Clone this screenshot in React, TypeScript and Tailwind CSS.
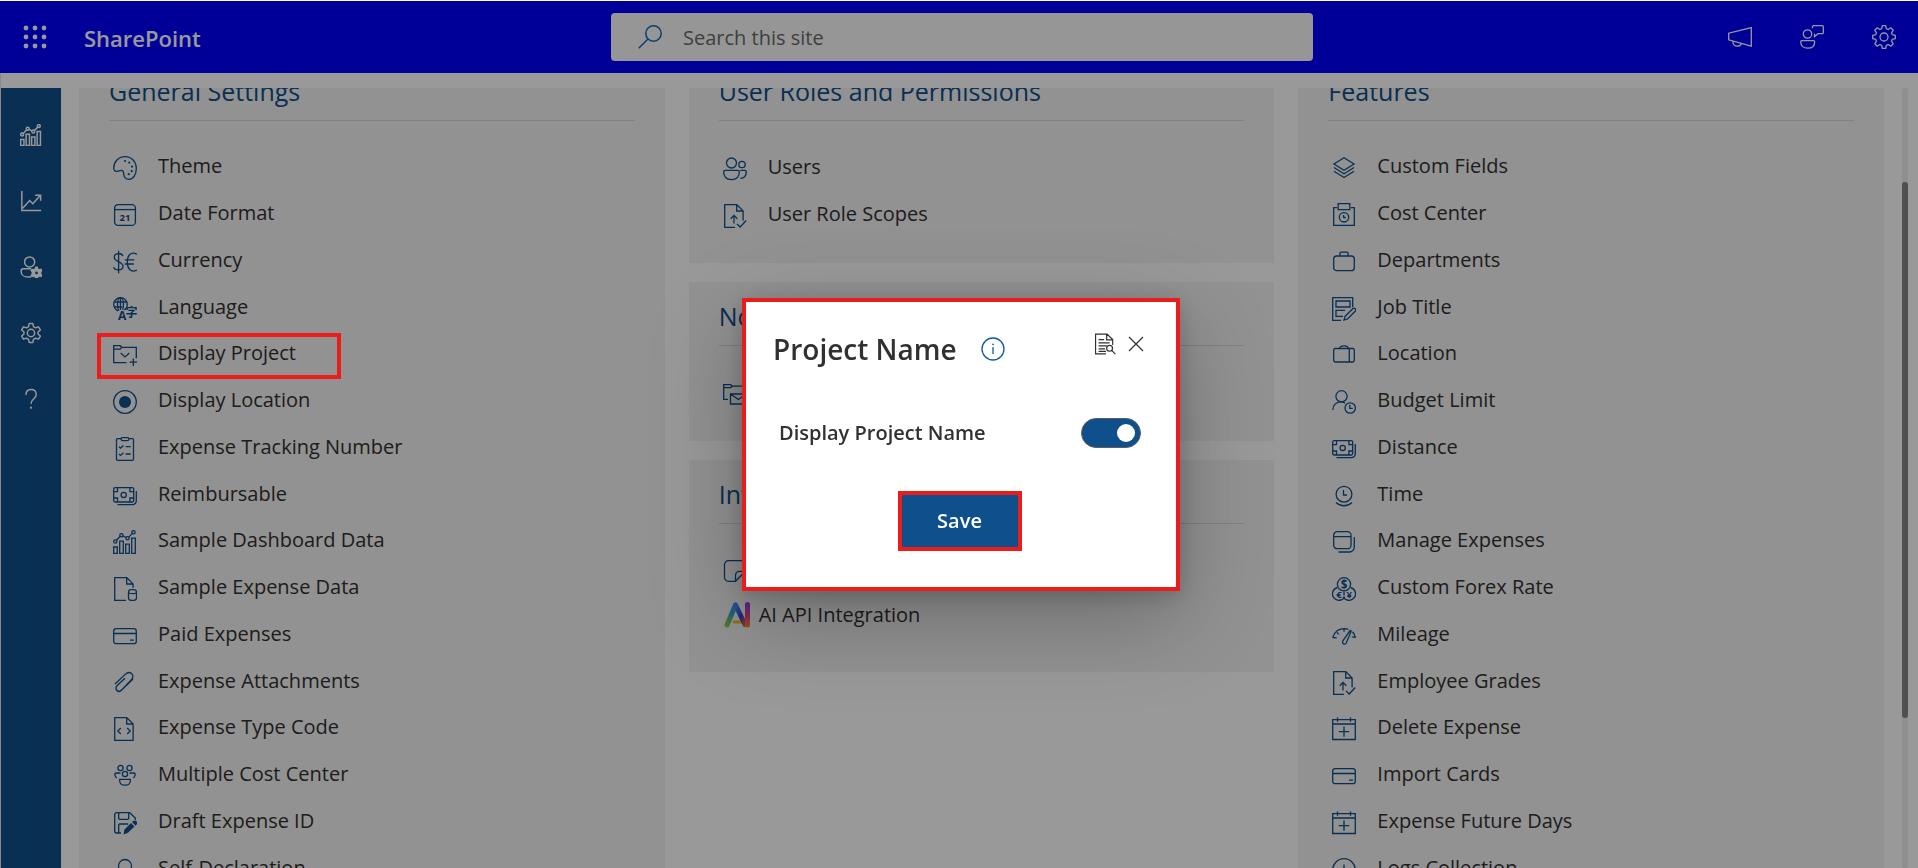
import React from "react";

type IconProps = { children: React.ReactNode; className?: string; weight?: number };

function Svg({ children, className = "size-6", weight = 1.3 }: IconProps) {
  return (
    <svg
      viewBox="0 0 24 24"
      className={`${className} shrink-0`}
      fill="none"
      stroke="currentColor"
      strokeWidth={weight}
      aria-hidden="true"
    >
      {children}
    </svg>
  );
}

const money = (
  <>
    <rect x=".7" y="3.700" width="20" height="14.300" rx="1.500" />
    <circle cx="10.700" cy="10.900" r="2.600" />
    <path d="M.7 7.700h3.800v-4M.7 14h3.800v4M20.700 7.700h-3.800v-4M20.700 14h-3.800v4" />
    <path d="M23.300 7v9.500a4 4 0 0 1-4 4.200H4.500" />
  </>
);

const card = (
  <>
    <rect x=".7" y="4.700" width="22.600" height="15" rx="2.500" />
    <path d="M.7 9.500h22.600M17 16.200h4" />
  </>
);

const chart = (
  <>
    <path d="M.7 17h3.600v6.300H.7zM6.700 11.200h3.600v12.100H6.700zM12.700 14.200h3.600v9.100h-3.600zM18.700 8.200h3.600v15.100h-3.600z" />
    <circle cx="2.300" cy="11.500" r="1.600" />
    <circle cx="8.400" cy="5.200" r="1.600" />
    <circle cx="14.500" cy="8.200" r="1.600" />
    <circle cx="20.500" cy="2.200" r="1.600" />
    <path d="m3.400 10.300 3.900-4M9.900 5.900l3.200 1.600M15.700 7.100l3.700-3.700" />
  </>
);

const docCheck = (
  <>
    <path d="M12 23.300H1.700V.7h12.100l6.300 6.200v9.500M13.700.7v6.300h6.300" />
    <path d="M11 19.500v-8M7.700 14.700 11 11.400l3.300 3.300M14 20l3.200 3 6-6.500" />
  </>
);

const calendarPlus = (
  <>
    <path d="M.7 2.700h22.600v19.800H.7zM.7 7h22.600M5.500.5v4.300M18.500.5v4.300M12 9.500v10.300M6.800 14.600h10.400" />
  </>
);

const icons = {
  chart,
  money,
  card,
  docCheck,
  calendarPlus,
  palette: (
    <>
      <path d="M.8 12.800C.4 6.200 5.200.7 12 .7c6.500 0 11.300 5 11.300 11.800 0 6-3 10.800-7.300 10.800-3.800 0-5.300-2.800-5.400-6.100-.1-2.700-1.600-3.300-3.600-2.600-2.600 1-6 1.500-6.200-1.800Z" />
      <g fill="currentColor" stroke="none">
        <circle cx="12" cy="5" r="1.100" />
        <circle cx="16.300" cy="6.600" r="1.100" />
        <circle cx="19" cy="10.600" r="1.100" />
        <circle cx="18.700" cy="15.200" r="1.100" />
        <circle cx="15.700" cy="18.200" r="1.100" />
      </g>
    </>
  ),
  date: (
    <>
      <rect x="1.600" y="1.600" width="20.800" height="20.800" rx="3.500" />
      <path d="M1.600 6.600h20.800" />
      <text x="12" y="17.700" textAnchor="middle" fontSize="9.500" fontWeight="700" fill="currentColor" stroke="none">21</text>
    </>
  ),
  currency: (
    <>
      <path d="M9.800 6C9 2.700 1.300 2.300 1.300 7.200c0 5 8.700 3.800 8.700 9 0 5-8.500 4.600-9.300 1M5.600.8v22.400" />
      <path d="M24 4.200c-6.500-3.500-9.700 1.800-9.700 7.800s3.200 11.300 9.700 8M11.800 9.800h9.500M11.800 14h9" />
    </>
  ),
  language: (
    <>
      <circle cx="7.500" cy="7.500" r="6.800" />
      <ellipse cx="7.500" cy="7.500" rx="3" ry="6.800" />
      <path d="M1.300 5h12.400M1.300 10h8M7.500.7v13" />
      <circle cx="9" cy="18" r="5.500" className="fill-[#f3f3f3]" stroke="none" />
      <text x="5" y="22.500" fontSize="12" fontWeight="700" fill="currentColor" stroke="none">A</text>
      <text x="12.500" y="20" fontSize="12" fontWeight="700" fill="currentColor" stroke="none" className="font-['Noto_Sans_CJK_SC',sans-serif]">字</text>
    </>
  ),
  folderPlus: (
    <>
      <path d="M13.500 19.700H.7V2.700h6.500l1.500 1.600h14.600v11M.7 6.200h6.500l1.500-1.900" />
      <path d="m7.700 10 4.300 3.900 4.300-3.900M20.300 15.500v7.400M16.600 19.200H24" />
    </>
  ),
  radio: (
    <>
      <circle cx="12" cy="12" r="11.300" />
      <circle cx="12" cy="12" r="6" fill="currentColor" stroke="none" />
    </>
  ),
  clipboard: (
    <>
      <path d="M8 1.700H4.500a1 1 0 0 0-1 1v19.600a1 1 0 0 0 1 1h15a1 1 0 0 0 1-1V2.700a1 1 0 0 0-1-1H16" />
      <rect x="8" y=".6" width="8" height="3" rx="1.500" />
      <path d="m6 9.700 1.500 1.400L10.500 8.400M6 17l1.500 1.400 3-2.700M12.700 9.700h5M12.700 17h5" />
    </>
  ),
  docDb: (
    <>
      <path d="M13 23.300H1.700V.7h12.100l6.300 6.200v3.800M13.700.7v6.300h6.300" />
      <rect x="15.500" y="12.600" width="8" height="10.700" rx="2.600" />
      <path d="M15.500 15.500c1 1.500 7 1.500 8 0" />
    </>
  ),
  paperclip: (
    <path d="M2 13 12.200 3.400c5-4.600 10.500 1 6 5.600L9.200 18.500c-4 4-8.200-.3-5-4L12 7.200M3.500 15.200c-1.500 4 1.800 7.500 5.700 3.300L20 8" />
  ),
  docCode: (
    <>
      <path d="M1.700.7h12.100l6.300 6.200v16.400H1.700zM13.700.7v6.300h6.300" />
      <path d="m7.800 11-3 3 3 3M14.200 11l3 3-3 3" />
    </>
  ),
  team: (
    <>
      <circle cx="7.500" cy="4" r="2.600" />
      <circle cx="16.500" cy="4" r="2.600" />
      <circle cx="12" cy="10" r="2.600" />
      <path d="M6.700 15.300h10.600v1.600a4 4 0 0 1-4 4.200h-2.600a4 4 0 0 1-4-4.200zM7.500 9H3.200C1.300 9 1.300 12 3.700 14M16.500 9h4.300c1.900 0 1.900 3-.5 5" />
    </>
  ),
  saveEdit: (
    <>
      <path d="M8 22H3.700a2 2 0 0 1-2-2V3.700a2 2 0 0 1 2-2h13L22.300 7v2M5.700 1.700v5.600a1 1 0 0 0 1 1h8a1 1 0 0 0 1-1V1.700M5.700 22v-8a1 1 0 0 1 1-1h8.500" />
      <path d="m18 12 3.500 3.500-6.500 6.300-4.500 1.700 1-4.900zM19 11l1.200-1a2.500 2.500 0 0 1 3.500 3.500L22.500 14.700z" fill="currentColor" stroke="none" />
    </>
  ),
  person: (
    <>
      <circle cx="12" cy="8" r="6.500" />
      <path d="M2 23c1-5 5-8.500 10-8.500s9 3.500 10 8.500" />
    </>
  ),
  users: (
    <>
      <circle cx="8.500" cy="6" r="5" />
      <circle cx="19" cy="7.500" r="3.200" />
      <path d="M2.200 13.300h12.600c.8 0 1.500.7 1.500 1.500 0 5.300-3 7.900-7.800 7.900S.7 20.100.7 14.800c0-.8.700-1.500 1.500-1.500ZM17.300 13.300h4.500c.8 0 1.500.7 1.500 1.500 0 4.500-2 6.500-6 6.500" />
    </>
  ),
  folderMail: (
    <>
      <path d="M5 17.300H.7V2.700h7l1.500 1.500h14.100v5M.7 5.700h7l1.500-1.500" />
      <path d="M7.500 12h15.800v10H7.500zM7.500 12l7.900 5.500 7.900-5.500" />
    </>
  ),
  note: (
    <path d="M12.500 22.300H5.500a4 4 0 0 1-4-4V5.700a4 4 0 0 1 4-4h13a4 4 0 0 1 4 4v6.600zM12.500 22.300v-6a4 4 0 0 1 4-4h6" />
  ),
  layers: (
    <path d="M12 1.700 22 8l-10 6.200L2 8zM2 11.500l10 6.200 10-6.200M2 15.200l10 6.300 10-6.300" />
  ),
  costCenter: (
    <>
      <path d="M5 4.700H1.700v17.600h20.600V4.700H19M6.200.7h11.600v6H6.200z" />
      <circle cx="12" cy="14.300" r="4.700" />
      <path d="M11.600 12v2.500h2.200" />
    </>
  ),
  briefcase: (
    <>
      <rect x="1.700" y="6" width="20.600" height="14.700" rx="3" />
      <path d="M8 6V3.200a1 1 0 0 1 1-1h6a1 1 0 0 1 1 1V6" />
    </>
  ),
  formEdit: (
    <>
      <path d="M9 23.300H.7V.7h20v9.500M4 4h14v6H4zM13 13.300H4v6h7" />
      <path d="m13 19.500 7.700-7.700a1.700 1.700 0 0 1 2.500 2.500l-7.700 7.700-3.500 1z" />
    </>
  ),
  luggage: (
    <>
      <rect x="1.700" y="5.500" width="20.600" height="13.500" rx="1.800" />
      <path d="M7.500 5.500c.7-3.500 8.300-3.500 9 0M17.300 5.500V19" />
    </>
  ),
  personClock: (
    <>
      <circle cx="9.500" cy="6.300" r="5.600" />
      <path d="M.7 20c.4-5 3.800-8.100 8.300-8.100 1.700 0 3 .5 4 1.200" />
      <circle cx="18.200" cy="18" r="5.200" />
      <path d="M17.800 14.800v3.600h3" />
    </>
  ),
  time: (
    <>
      <circle cx="12" cy="10.200" r="7.900" />
      <path d="M11.500 6v5h3.500M4 18.500c4.500 4.300 11.500 4.300 16 0" />
    </>
  ),
  windows: (
    <>
      <rect x="1.700" y="1.700" width="17.300" height="17" rx="3.500" />
      <path d="M1.700 6.700H19M22.300 7v9.500a5 5 0 0 1-5 5.500H6.500" />
    </>
  ),
  coins: (
    <>
      <circle cx="12" cy="7.300" r="6.600" />
      <path d="M5.300 10.500a6.500 6.500 0 1 0 7.500 9.200M18.700 10.500a6.500 6.500 0 1 1-7.500 9.200M12 14.500v4" />
      <g fill="currentColor" stroke="none" fontWeight="700" textAnchor="middle">
        <text x="12" y="11.500" fontSize="11.500">$</text>
        <text x="7" y="20.500" fontSize="9.500">€</text>
        <text x="17.200" y="20.500" fontSize="9.500">¥</text>
      </g>
    </>
  ),
  gauge: (
    <path d="M.7 13.500C2.500 8 7 4.700 12.500 4.700c1.700 0 3 .3 4 .8M.7 13.500l4 .3M5 8.300l1.700 2M12 4.700v3M18.500 6 11 16.500c-1.500 2.700 1.500 5.200 3.200 2.500L19.500 6.500M20.500 7.800c1.300 1.500 2.300 3.400 2.800 5.500l-3.500-.5" />
  ),
  logs: (
    <>
      <circle cx="12" cy="12" r="11.300" />
      <path d="M12 6.500v8.500M8 11.500l4 4 4-4" />
    </>
  ),
};

type IconName = keyof typeof icons;
type Entry = { label: string; icon: IconName; marked?: boolean };

const general: Entry[] = [
  { label: "Theme", icon: "palette" },
  { label: "Date Format", icon: "date" },
  { label: "Currency", icon: "currency" },
  { label: "Language", icon: "language" },
  { label: "Display Project", icon: "folderPlus", marked: true },
  { label: "Display Location", icon: "radio" },
  { label: "Expense Tracking Number", icon: "clipboard" },
  { label: "Reimbursable", icon: "money" },
  { label: "Sample Dashboard Data", icon: "chart" },
  { label: "Sample Expense Data", icon: "docDb" },
  { label: "Paid Expenses", icon: "card" },
  { label: "Expense Attachments", icon: "paperclip" },
  { label: "Expense Type Code", icon: "docCode" },
  { label: "Multiple Cost Center", icon: "team" },
  { label: "Draft Expense ID", icon: "saveEdit" },
  { label: "Self-Declaration", icon: "person" },
];

const features: Entry[] = [
  { label: "Custom Fields", icon: "layers" },
  { label: "Cost Center", icon: "costCenter" },
  { label: "Departments", icon: "briefcase" },
  { label: "Job Title", icon: "formEdit" },
  { label: "Location", icon: "luggage" },
  { label: "Budget Limit", icon: "personClock" },
  { label: "Distance", icon: "money" },
  { label: "Time", icon: "time" },
  { label: "Manage Expenses", icon: "windows" },
  { label: "Custom Forex Rate", icon: "coins" },
  { label: "Mileage", icon: "gauge" },
  { label: "Employee Grades", icon: "docCheck" },
  { label: "Delete Expense", icon: "calendarPlus" },
  { label: "Import Cards", icon: "card" },
  { label: "Expense Future Days", icon: "calendarPlus" },
  { label: "Logs Collection", icon: "logs" },
];

function Card({ title, children }: { title: string; children: React.ReactNode }) {
  return (
    <section className="bg-[#f3f3f3] px-[30px] pt-[18px] pb-[26px]">
      <h2 className="border-b border-[#d8d8d8] pb-[13px] text-[25px] leading-8 text-[#0f4f8b]">{title}</h2>
      <div className="pt-[22px]">{children}</div>
    </section>
  );
}

function Item({ label, icon, marked }: Entry) {
  return (
    <li className="relative flex min-h-[46px] items-center">
      <a href="#" className="flex items-center gap-[21px] px-1">
        <span className="mt-1 text-[#0f4f8b]">
          <Svg>{icons[icon]}</Svg>
        </span>
        <span className="whitespace-nowrap">{label}</span>
      </a>
      {marked && <span className="absolute -left-3 top-[3px] z-50 h-[46px] w-[244px] border-4 border-[#ea1c1c]" />}
    </li>
  );
}

function SideIcon({ label, children }: { label: string; children: React.ReactNode }) {
  return (
    <a href="#" aria-label={label} className="text-white">
      <Svg className="size-[22px]" weight={1.6}>{children}</Svg>
    </a>
  );
}

const cog =
  "M10 1.700h4l.7 3.300 2.300 1.300 3.200-1 2 3.400-2.500 2.300v2l2.500 2.300-2 3.400-3.200-1-2.300 1.300-.7 3.300h-4L9.300 19 7 17.700l-3.200 1-2-3.400L4.300 13v-2L1.800 8.700l2-3.400 3.200 1L9.300 5z";

export default function App() {
  return (
    <div className="flex h-screen flex-col overflow-hidden bg-white pt-px font-['Open_Sans',sans-serif] text-xl leading-7 text-[#323130]">
      <header className="grid h-[72px] shrink-0 grid-cols-[1fr_702px_1fr] items-center bg-[#0000ff] pl-1.5 text-white">
        <div className="flex items-center">
          <button type="button" aria-label="App launcher" className="ml-[17px]">
            <svg viewBox="0 0 24 24" className="size-6" fill="currentColor" aria-hidden="true">
              {[3, 12, 21].map((y) => [3, 12, 21].map((x) => <circle key={`${x}-${y}`} cx={x} cy={y} r="2.400" />))}
            </svg>
          </button>
          <a href="#" className="ml-[37px] pt-0.5 text-[22px] font-semibold">SharePoint</a>
        </div>
        <label className="flex h-12 items-center gap-[21px] rounded bg-[#fafafa] px-[27px]">
          <svg viewBox="0 0 24 24" className="size-6 shrink-0 text-[#0f6cbd]" fill="none" stroke="currentColor" strokeWidth="1.500" aria-hidden="true">
            <circle cx="15.500" cy="8.500" r="7.700" />
            <path d="M10 14 .7 23.300" />
          </svg>
          <input
            type="search"
            aria-label="Search"
            placeholder="Search this site"
            className="w-full bg-transparent pt-0.5 text-[#424242] outline-none placeholder:text-[#6a6a6a]"
          />
        </label>
        <div className="flex items-center justify-end gap-12 pr-[22px]">
          <button type="button" aria-label="Announcements">
            <Svg>
              <path d="M23.300 2.500v18.600L.7 14.800V8.200zM4.700 16c.3 3.500 2.300 5.200 4.600 5.200 2 0 3.500-1.200 4-2.700" />
            </Svg>
          </button>
          <button type="button" aria-label="Feedback">
            <Svg>
              <circle cx="7.500" cy="9" r="4.200" />
              <path d="M1.700 15.700h12c.6 0 1 .4 1 1 0 4.300-3 6.500-7 6.500s-7-2.200-7-6.500c0-.6.4-1 1-1ZM12.500 3.200V1.700a1 1 0 0 1 1-1h8.800a1 1 0 0 1 1 1v6a1 1 0 0 1-1 1H18l-3.500 3V8.700" />
            </Svg>
          </button>
          <button type="button" aria-label="Settings">
            <Svg>
              <circle cx="12" cy="12" r="4" />
              <path d="M10.300.7h3.400l.6 3 1.900.8 2.600-1.700 2.400 2.400-1.700 2.600.8 1.900 3 .6v3.400l-3 .6-.8 1.900 1.700 2.600-2.400 2.400-2.600-1.700-1.900.8-.6 3h-3.400l-.6-3-1.900-.8-2.600 1.700-2.400-2.400 1.700-2.600-.8-1.900-3-.6v-3.400l3-.6.8-1.900-1.700-2.600 2.400-2.400 2.600 1.700 1.900-.8z" strokeLinejoin="round" />
            </Svg>
          </button>
        </div>
      </header>

      <div className="flex min-h-0 flex-1 border-l border-[#e5e5e5] pt-[15px]">
        <nav aria-label="Main" className="flex w-[60px] shrink-0 flex-col items-center gap-11 bg-[#0f4f8b] pt-9">
          <SideIcon label="Dashboard">{chart}</SideIcon>
          <SideIcon label="Reports">
            <path d="M2 1v21.300h21M3 20l7.500-8.500 3.500 3.500 8-9M16.500 5.700h6v6" />
          </SideIcon>
          <SideIcon label="User settings">
            <circle cx="10.500" cy="6.500" r="5.500" />
            <path d="M12 23H9C4 23 1.200 20 1.200 16.500c0-1.500 1-2.500 2.500-2.500H12" />
            <path d="M16.600 11.500h2.800l.5 2 1.500.8 2-.6 1.300 2.400-1.400 1.500v1.700l1.400 1.500-1.300 2.400-2-.6-1.500.8-.5 2h-2.800l-.5-2-1.500-.8-2 .6-1.300-2.400 1.400-1.500v-1.700l-1.400-1.500 1.300-2.400 2 .6 1.500-.8zM18 17a1.500 1.500 0 1 0 0 3 1.500 1.500 0 0 0 0-3Z" fill="currentColor" fillRule="evenodd" stroke="none" />
          </SideIcon>
          <SideIcon label="Settings">
            <circle cx="12" cy="12" r="4" />
            <path d={cog} strokeLinejoin="round" />
          </SideIcon>
          <SideIcon label="Help">
            <path d="M6.500 7.500C6.500 4 8.700 1.700 12 1.700s5.700 2 5.700 5.300c0 5-5.700 4.500-5.700 10.500" />
            <circle cx="12" cy="21.500" r="1.200" fill="currentColor" stroke="none" />
          </SideIcon>
        </nav>

        <main className="min-w-0 flex-1 overflow-hidden px-[18px]">
          <div className="-mt-[31px] grid grid-cols-3 items-start gap-6">
            <Card title="General Settings">
              <ul className="grid h-[748px] auto-rows-fr">
                {general.map((e) => <Item key={e.label} {...e} />)}
              </ul>
            </Card>
            <div className="flex flex-col gap-[19px]">
              <Card title="User Roles and Permissions">
                <ul className="grid h-[94px] auto-rows-fr">
                  <Item label="Users" icon="users" />
                  <Item label="User Role Scopes" icon="docCheck" />
                </ul>
              </Card>
              <Card title="Notifications">
                <ul className="grid h-[47px] auto-rows-fr">
                  <Item label="Email Templates" icon="folderMail" />
                </ul>
              </Card>
              <Card title="Integrations">
                <ul className="grid h-[100px] auto-rows-fr pb-2">
                  <Item label="Teams" icon="note" />
                  <li className="flex items-center">
                    <a href="#" className="flex items-center gap-2 px-1">
                      <svg viewBox="0 0 28 28" className="size-7 shrink-0" fill="none" strokeLinecap="round" strokeWidth="5" aria-hidden="true">
                        <defs>
                          <linearGradient id="legLeft" x1="0" y1="1" x2="0.300" y2="0">
                            <stop offset="0" stopColor="#8cc63f" />
                            <stop offset="0.500" stopColor="#3fb4a0" />
                            <stop offset="1" stopColor="#3b8df0" />
                          </linearGradient>
                          <linearGradient id="legRight" x1="0" y1="0" x2="1" y2="1">
                            <stop offset="0" stopColor="#3b8df0" />
                            <stop offset="0.600" stopColor="#3a3fd0" />
                            <stop offset="1" stopColor="#e0662f" />
                          </linearGradient>
                          <linearGradient id="bar" gradientUnits="userSpaceOnUse" x1="0" y1="2" x2="0" y2="26">
                            <stop offset="0" stopColor="#8a3ff0" />
                            <stop offset="0.500" stopColor="#e0409a" />
                            <stop offset="1" stopColor="#f58a2a" />
                          </linearGradient>
                        </defs>
                        <path d="M11 21h8" stroke="#f0c020" strokeWidth="3" />
                        <path d="M12.500 4 22 23.500" stroke="url(#legRight)" />
                        <path d="M12.500 4 4 24" stroke="url(#legLeft)" />
                        <path d="M24.500 3.500v20.500" stroke="url(#bar)" />
                      </svg>
                      <span>AI API Integration</span>
                    </a>
                  </li>
                </ul>
              </Card>
            </div>
            <Card title="Features">
              <ul className="grid h-[748px] auto-rows-fr">
                {features.map((e) => <Item key={e.label} {...e} />)}
              </ul>
            </Card>
          </div>
        </main>

        <div aria-hidden="true" className="mr-2.5 w-1.5 shrink-0 rounded-full bg-[#eeeeee] pt-[94px]">
          <div className="h-[536px] rounded-full bg-[#858585]" />
        </div>
      </div>

      <div className="fixed inset-x-0 bottom-0 top-px z-40 bg-black/40" />

      <div className="fixed inset-0 z-50 flex items-center justify-center pl-1 pt-5">
        <div
          role="dialog"
          aria-modal="true"
          aria-labelledby="dialog-title"
          className="flex w-[438px] flex-col border-4 border-[#ea1c1c] bg-white pb-9 pl-[27px] pr-[30px] pt-[27px] shadow-[0_26px_84px_0_rgba(0,0,0,0.26),0_5px_20px_0_rgba(0,0,0,0.18)]"
        >
          <div className="flex items-start">
            <h1 id="dialog-title" className="text-[28px] font-semibold leading-10">Project Name</h1>
            <button type="button" aria-label="Information" className="ml-6 mt-2 text-[#0f5aa5]">
              <Svg>
                <circle cx="12" cy="12" r="11" />
                <path d="M12 10v7" />
                <circle cx="12" cy="7.300" r=".9" fill="currentColor" stroke="none" />
              </Svg>
            </button>
            <div className="ml-auto mt-1 flex items-center gap-3 pr-0.5">
              <button type="button" aria-label="View log">
                <Svg className="size-[22px]">
                  <path d="M13 22.800H1.700V1.200h12.500l6.200 6v6M13.800 1.200v6.300h6.500M5 7.300h6M5 10.700h12M5 14h9M5 17.300h7M5 20h8" />
                  <circle cx="17" cy="16.700" r="3.200" />
                  <path d="m19.300 19 4 4" />
                </Svg>
              </button>
              <button type="button" aria-label="Close">
                <Svg className="size-4" weight={1.8}>
                  <path d="m1.500 1.500 21 21M22.500 1.500l-21 21" />
                </Svg>
              </button>
            </div>
          </div>
          <div className="mt-[49px] flex items-center justify-between pl-1.5 pr-[5px]">
            <label htmlFor="display-project" className="font-semibold">Display Project Name</label>
            <input
              id="display-project"
              type="checkbox"
              role="switch"
              defaultChecked
              className="flex h-[30px] w-[60px] appearance-none items-center justify-end rounded-full border border-[#605e5c] bg-[#0f4f8b] px-[5px] before:size-[18px] before:rounded-full before:bg-white"
            />
          </div>
          <button
            type="button"
            className="mt-[43px] h-[60px] w-[124px] self-center border-4 border-[#ea1c1c] bg-[#0f4f8b] font-semibold text-white"
          >
            Save
          </button>
        </div>
      </div>
    </div>
  );
}
